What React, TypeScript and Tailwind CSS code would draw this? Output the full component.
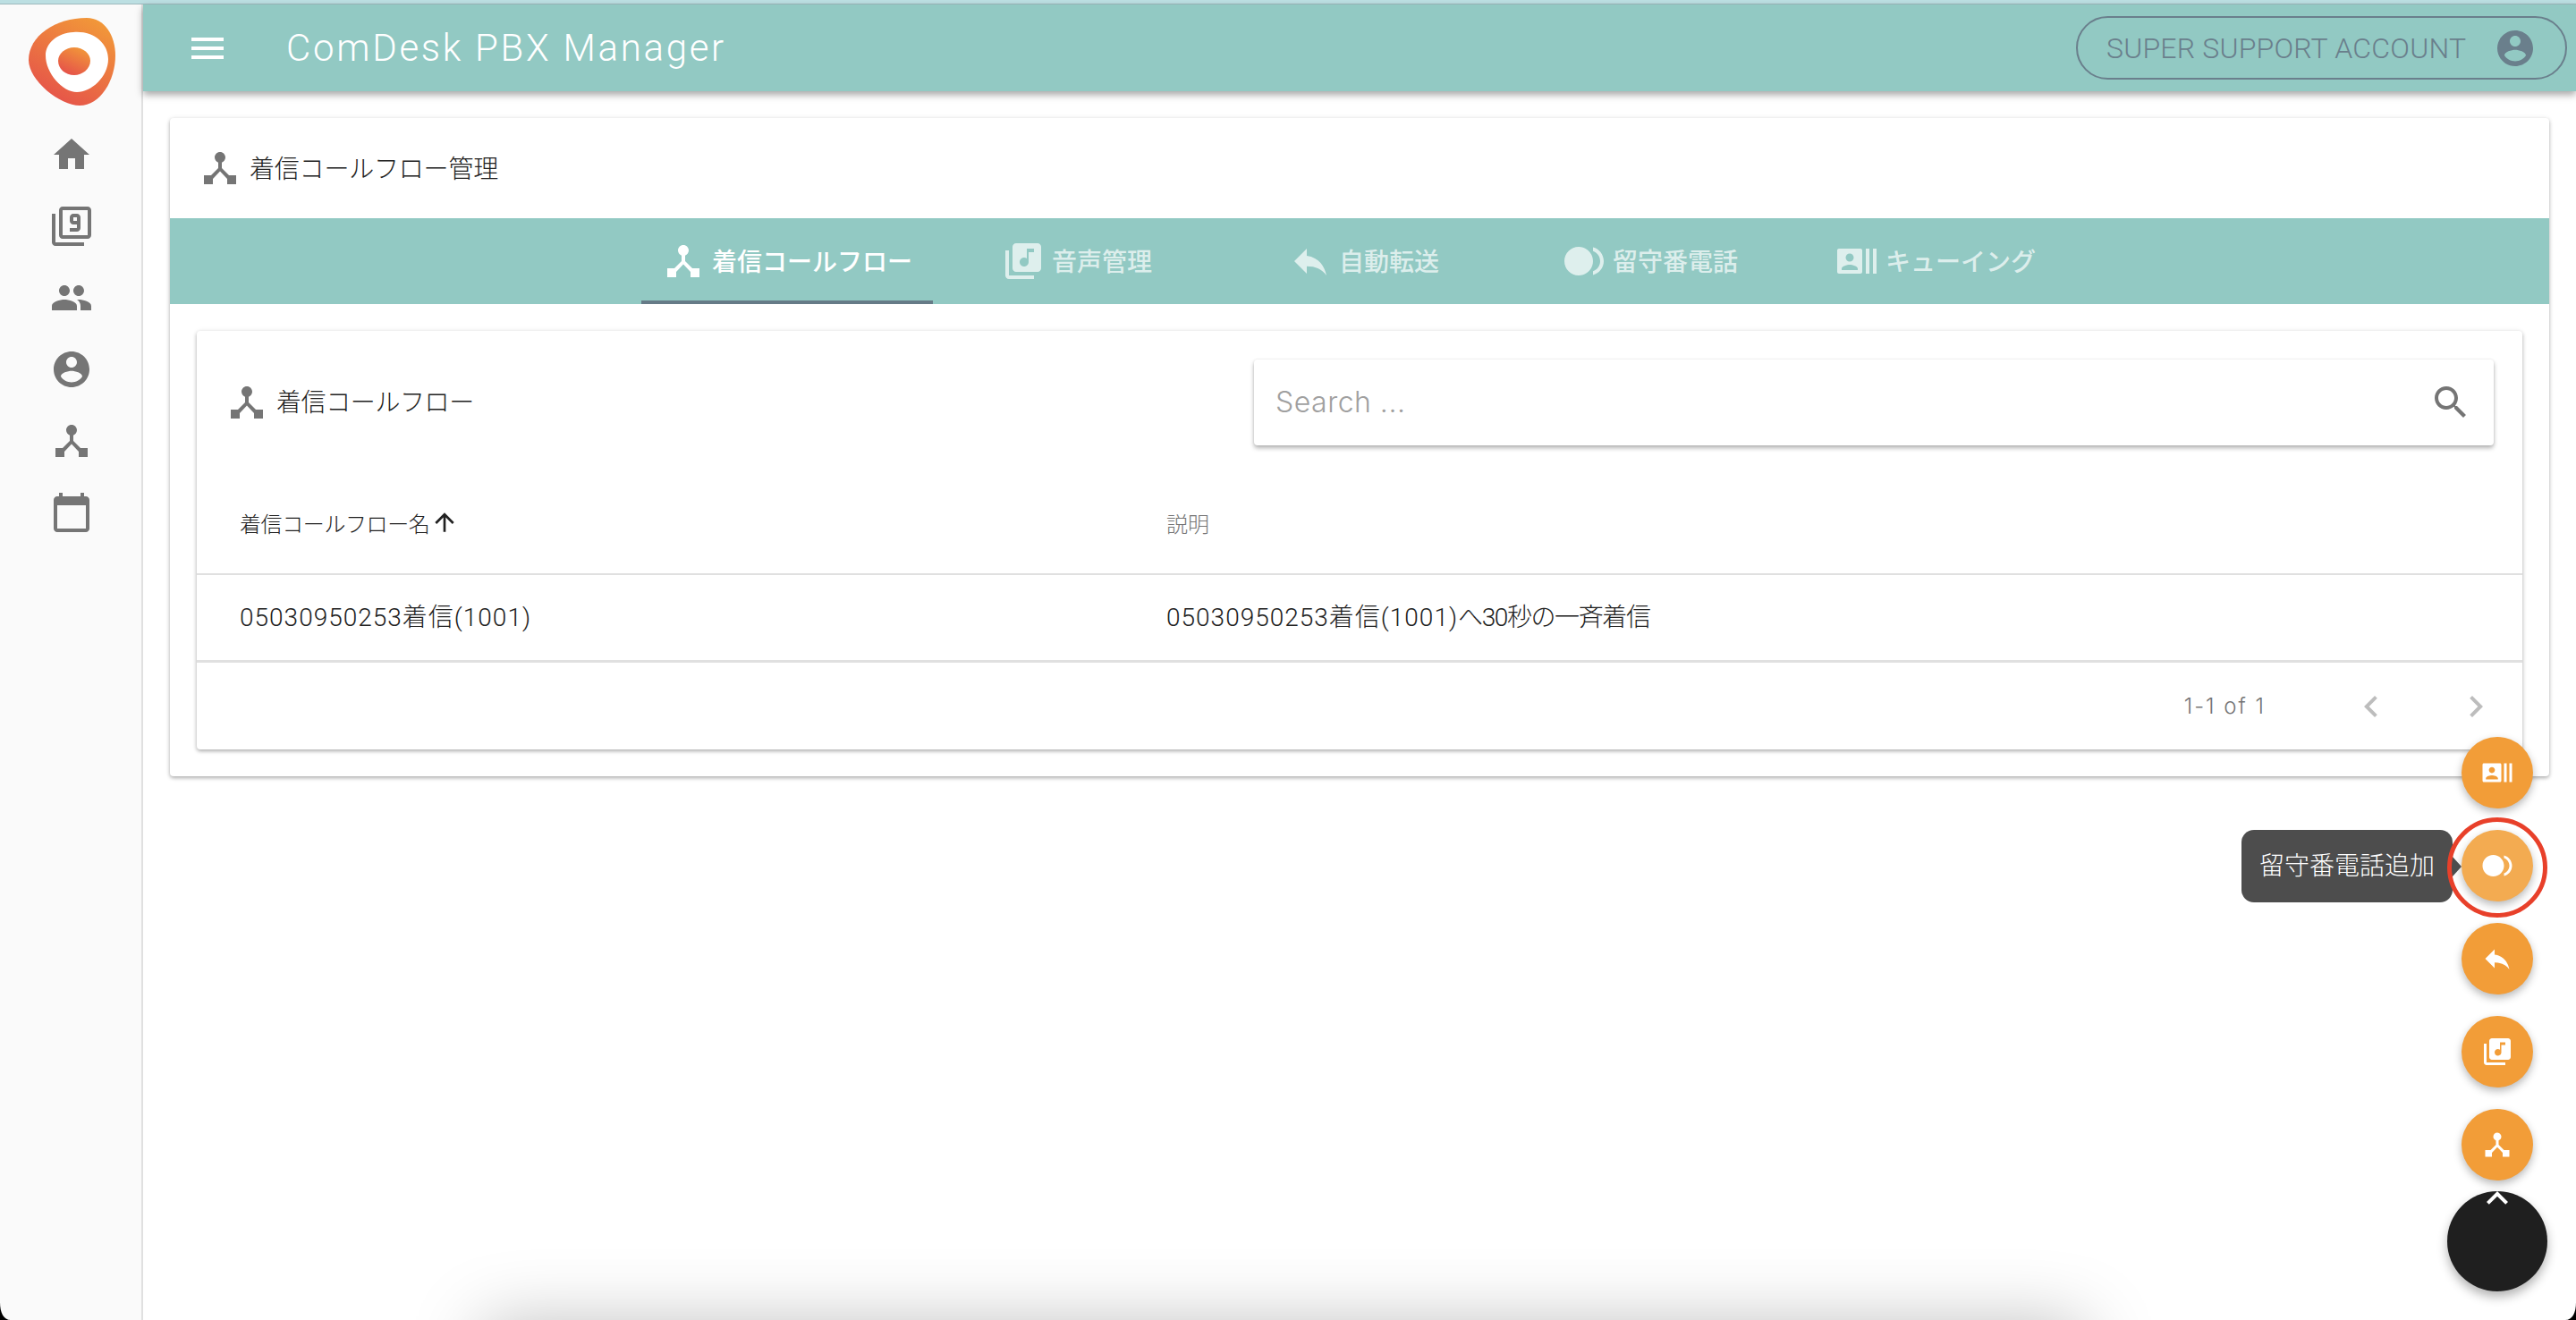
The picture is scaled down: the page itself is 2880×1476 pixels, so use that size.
import React from 'react';

const P = {
  home: 'M10 20v-6h4v6h5v-8h3L12 3 2 12h3v8z',
  filter9: 'M3 5H1v16c0 1.1.9 2 2 2h16v-2H3V5zm18-4H7c-1.1 0-2 .9-2 2v14c0 1.1.9 2 2 2h14c1.1 0 2-.9 2-2V3c0-1.1-.9-2-2-2zm0 16H7V3h14v14zM15 5h-2c-1.1 0-2 .89-2 2v2c0 1.11.9 2 2 2h2v2h-4v2h4c1.1 0 2-.89 2-2V7c0-1.11-.9-2-2-2zm0 4h-2V7h2v2z',
  people: 'M16 11c1.66 0 2.99-1.34 2.99-3S17.66 5 16 5c-1.66 0-3 1.34-3 3s1.34 3 3 3zm-8 0c1.66 0 2.99-1.34 2.99-3S9.66 5 8 5C6.34 5 5 6.34 5 8s1.34 3 3 3zm0 2c-2.33 0-7 1.17-7 3.5V19h14v-2.5c0-2.33-4.67-3.5-7-3.5zm8 0c-.29 0-.62.02-.97.05 1.16.84 1.97 1.97 1.97 3.45V19h6v-2.5c0-2.33-4.67-3.5-7-3.5z',
  account: 'M12 2C6.48 2 2 6.48 2 12s4.48 10 10 10 10-4.48 10-10S17.52 2 12 2zm0 3c1.66 0 3 1.34 3 3s-1.34 3-3 3-3-1.34-3-3 1.34-3 3-3zm0 14.2c-2.5 0-4.71-1.28-6-3.22.03-1.99 4-3.08 6-3.08 1.99 0 5.97 1.09 6 3.08-1.29 1.94-3.5 3.22-6 3.22z',
  hub: 'M17 16l-4-4V8.82C14.16 8.4 15 7.3 15 6c0-1.66-1.34-3-3-3S9 4.34 9 6c0 1.3.84 2.4 2 2.82V12l-4 4H3v5h5v-3.05l4-4.2 4 4.2V21h5v-5h-4z',
  calendar: 'M20 3h-1V1h-2v2H7V1H5v2H4c-1.1 0-2 .9-2 2v16c0 1.1.9 2 2 2h16c1.1 0 2-.9 2-2V5c0-1.1-.9-2-2-2zm0 18H4V8h16v13z',
  music: 'M20 2H8c-1.1 0-2 .9-2 2v12c0 1.1.9 2 2 2h12c1.1 0 2-.9 2-2V4c0-1.1-.9-2-2-2zm-2 5h-3v5.5c0 1.38-1.12 2.5-2.5 2.5S10 13.88 10 12.5s1.12-2.5 2.5-2.5c.57 0 1.08.19 1.5.51V5h4v2zM4 6H2v14c0 1.1.9 2 2 2h14v-2H4V6z',
  reply: 'M10 9V5l-7 7 7 7v-4.1c5 0 8.5 1.6 11 5.1-1-5-4-10-11-11z',
  toll: 'M9 4c4.42 0 8 3.58 8 8s-3.58 8-8 8-8-3.58-8-8 3.58-8 8-8zM21 12c0-2.61-1.67-4.83-4-5.65V4.26c3.45.89 6 4.01 6 7.74s-2.55 6.85-6 7.74v-2.09c2.33-.82 4-3.04 4-5.65z',
  actors: 'M21 5v14h2V5h-2zm-4 14h2V5h-2v14zM14 5H2c-.55 0-1 .45-1 1v12c0 .55.45 1 1 1h12c.55 0 1-.45 1-1V6c0-.55-.45-1-1-1zM8 7.75c1.24 0 2.25 1.01 2.25 2.25S9.24 12.25 8 12.25 5.75 11.24 5.75 10 6.76 7.75 8 7.75zM12.5 17h-9v-.75c0-1.5 3-2.25 4.5-2.25s4.5.75 4.5 2.25V17z',
  search: 'M15.5 14h-.79l-.28-.27C15.41 12.59 16 11.11 16 9.5 16 5.91 13.09 3 9.5 3S3 5.91 3 9.5 5.91 16 9.5 16c1.61 0 3.09-.59 4.23-1.57l.27.28v.79l5 4.99L20.49 19l-4.99-5zm-6 0C7.01 14 5 11.99 5 9.5S7.01 5 9.5 5 14 7.01 14 9.5 11.99 14 9.5 14z',
  menu: 'M3 18h18v-2H3v2zm0-5h18v-2H3v2zm0-7v2h18V6H3z',
  left: 'M15.41 7.41L14 6l-6 6 6 6 1.41-1.41L10.83 12z',
  right: 'M10 6L8.59 7.41 13.17 12l-4.58 4.59L10 18l6-6z',
  up: 'M4 12l1.41 1.41L11 7.83V20h2V7.83l5.58 5.59L20 12l-8-8-8 8z',
  less: 'M12 8l-6 6 1.41 1.41L12 10.83l4.59 4.58L18 14z',
};

function Icon({ d, className }: { d: string; className?: string }) {
  return (
    <svg viewBox="0 0 24 24" className={className} fill="currentColor">
      <path d={d} />
    </svg>
  );
}

function Logo() {
  return (
    <svg viewBox="0 0 97 98" className="w-[97px] h-[98px]">
      <defs>
        <linearGradient id="logoGrad" x1="0.85" y1="0" x2="0.3" y2="1">
          <stop offset="0" stopColor="#f29b38" />
          <stop offset="1" stopColor="#e5514a" />
        </linearGradient>
      </defs>
      <path d="M65 0C85 0 97 20 97 42C97 70 80 98 57 98C35 98 0 70 0 47C0 20 30 0 65 0Z" fill="url(#logoGrad)" />
      <path d="M50 16C72 14 89 28 89 46C89 66 70 83 54 83C38 83 19 62 19 42C19 28 32 17 50 16Z" fill="#fff" />
      <path d="M51 33C61 33 69 40 69 48C69 57 60 64 51 64C41 64 33 57 33 48C33 40 41 33 51 33Z" fill="url(#logoGrad)" />
    </svg>
  );
}

const sideItems = [P.home, P.filter9, P.people, P.account, P.hub, P.calendar];

const tabs = [
  { label: '着信コールフロー', icon: P.hub, w: 'w-[326px]', active: true },
  { label: '音声管理', icon: P.music, w: 'w-[322px]', active: false },
  { label: '自動転送', icon: P.reply, w: 'w-[320px]', active: false },
  { label: '留守番電話', icon: P.toll, w: 'w-[320px]', active: false },
  { label: 'キューイング', icon: P.actors, w: 'w-[318px]', active: false },
];

const fabs = [
  { icon: P.actors, hover: false },
  { icon: P.toll, hover: true },
  { icon: P.reply, hover: false },
  { icon: P.music, hover: false },
  { icon: P.hub, hover: false },
];

export default function App() {
  return (
    <div className="relative w-[2880px] h-[1476px] overflow-hidden bg-white flex flex-col font-['Roboto','Noto_Sans_CJK_JP',sans-serif] font-light text-[#212121]">
      <div className="h-[5px] bg-[#bcdfe2] border-b border-[#9fb9bd] shrink-0" />

      <div className="flex flex-1 min-h-0">
        {/* sidebar */}
        <div className="w-[160px] shrink-0 bg-[#fafafa] border-r-2 border-[#e0e0e0] flex flex-col items-center pl-[2px] pt-[15px]">
          <Logo />
          <div className="mt-[31px] flex flex-col items-center gap-[32px]">
            {sideItems.map((d, i) => (
              <Icon key={i} d={d} className="w-[48px] h-[48px] text-[#757575]" />
            ))}
          </div>
        </div>

        <div className="flex-1 min-w-0 flex flex-col">
          {/* app bar */}
          <div className="relative h-[97px] shrink-0 bg-[#92c9c3] flex items-center pl-[48px] pr-[10px] shadow-[0_4px_8px_rgba(0,0,0,0.35)]">
            <Icon d={P.menu} className="w-[48px] h-[48px] text-white" />
            <div className="ml-[64px] text-[42px] text-white tracking-[2.7px]">ComDesk PBX Manager</div>
            <div className="ml-auto w-[549px] h-[71px] rounded-full border-2 border-[#6a7f8c] flex items-center pl-[32px] pr-[32px] text-[#6a7f8c] text-[32px]">
              <span className="tracking-[0.2px]">SUPER SUPPORT ACCOUNT</span>
              <Icon d={P.account} className="ml-auto w-[48px] h-[48px]" />
            </div>
          </div>

          {/* page */}
          <div className="px-[30px] pt-[30px]">
            <div className="rounded-[4px] bg-white shadow-[0_2px_4px_rgba(0,0,0,0.3),0_0_6px_rgba(0,0,0,0.06)]">
              <div className="h-[112px] flex items-center pl-[32px] text-[28px]">
                <Icon d={P.hub} className="w-[48px] h-[48px] text-[#757575]" />
                <span className="ml-[9px] pt-[3px] tracking-[-0.2px]">着信コールフロー管理</span>
              </div>

              <div className="h-[96px] bg-[#92c9c3] flex justify-center">
                {tabs.map((t) => (
                  <div
                    key={t.label}
                    className={`${t.w} relative flex items-center justify-center gap-[8px] text-[28px] font-medium ${t.active ? 'text-white' : 'text-white/70'}`}
                  >
                    <Icon d={t.icon} className="w-[48px] h-[48px]" />
                    <span className="pt-[4px]">{t.label}</span>
                    {t.active && <div className="absolute left-0 right-0 bottom-0 h-[4px] bg-[#667b87]" />}
                  </div>
                ))}
              </div>

              <div className="p-[30px]">
                <div className="rounded-[4px] bg-white shadow-[0_2px_4px_rgba(0,0,0,0.3),0_0_6px_rgba(0,0,0,0.06)]">
                  <div className="h-[160px] flex items-center pl-[32px] pr-[32px] text-[28px]">
                    <Icon d={P.hub} className="w-[48px] h-[48px] text-[#757575]" />
                    <span className="ml-[9px] pt-[2px] tracking-[-0.4px]">着信コールフロー</span>
                    <div className="ml-auto w-[1386px] h-[96px] rounded-[4px] bg-white shadow-[0_3px_5px_rgba(0,0,0,0.3),0_0_3px_rgba(0,0,0,0.08)] flex items-center pl-[24px] pr-[24px]">
                      <span className="font-['Inter',sans-serif] text-[32px] tracking-[0.5px] text-[#a0a0a0]">Search ...</span>
                      <Icon d={P.search} className="ml-auto w-[48px] h-[48px] text-[#757575]" />
                    </div>
                  </div>

                  <div className="h-[113px] flex items-center border-b-2 border-[#e0e0e0] pl-[48px] text-[24px]">
                    <div className="w-[1036px] flex items-center">
                      <span className="pt-[2px] tracking-[-0.4px]">着信コールフロー名</span>
                      <Icon d={P.up} className="ml-[1px] -mt-[3px] w-[32px] h-[32px] text-[#212121]" />
                    </div>
                    <span className="pt-[2px] text-[#757575]">説明</span>
                  </div>

                  <div className="h-[98px] flex items-center border-b-[3px] border-[#e0e0e0] pl-[48px] text-[28px]">
                    <div className="w-[1036px] tracking-[1px]">05030950253着信(1001)</div>
                    <div>
                      <span className="tracking-[1px]">05030950253着信(1001)</span>
                      <span className="tracking-[-1.4px]">へ30秒の一斉着信</span>
                    </div>
                  </div>

                  <div className="h-[97px] flex items-center justify-end pr-[28px] text-[#757575]">
                    <span className="font-['Inter',sans-serif] text-[24px] tracking-[2px] mr-[94px]">1-1 of 1</span>
                    <Icon d={P.left} className="w-[48px] h-[48px] text-[#bdbdbd]" />
                    <Icon d={P.right} className="ml-[69px] w-[48px] h-[48px] text-[#bdbdbd]" />
                  </div>
                </div>
              </div>
            </div>
          </div>
        </div>
      </div>

      {/* speed dial */}
      <div className="absolute right-[48px] top-[824px] w-[80px] flex flex-col gap-[24px]">
        {fabs.map((f, i) => (
          <div
            key={i}
            className={`w-[80px] h-[80px] rounded-full flex items-center justify-center text-white shadow-[0_4px_10px_rgba(0,0,0,0.28)] ${f.hover ? 'bg-[#f3ab51]' : 'bg-[#f29d38]'}`}
          >
            <Icon d={f.icon} className="w-[36px] h-[36px]" />
          </div>
        ))}
      </div>

      <div className="absolute left-[2736px] top-[1332px] w-[112px] h-[112px] rounded-full bg-[#1f1f1f] shadow-[0_6px_12px_rgba(0,0,0,0.3)]" />
      <Icon d={P.less} className="absolute left-[2768px] top-[1316px] w-[48px] h-[48px] text-white" />

      {/* tooltip */}
      <div className="absolute left-[2506px] top-[928px] w-[236px] h-[81px] rounded-[14px] bg-[#4d4d4d] flex items-center justify-center text-[28px] text-white">
        留守番電話追加
      </div>
      <div className="absolute left-[2742px] top-[958px] w-0 h-0 border-y-[11px] border-y-transparent border-l-[10px] border-l-[#4d4d4d]" />

      {/* highlight ring */}
      <div className="absolute left-[2736px] top-[914px] w-[112px] h-[112px] rounded-full border-[5px] border-[#e8402a]" />

      {/* shadow of the dialog parked below the page */}
      <div className="absolute left-[540px] top-[1480px] w-[1790px] h-[200px] bg-white shadow-[0_0_80px_rgba(0,0,0,0.26)]" />

      {/* window corners */}
      <div className="absolute left-0 bottom-0 w-[12px] h-[20px] bg-black [clip-path:path('M0_0C0_12_4_20_12_20L0_20Z')]" />
      <div className="absolute right-0 bottom-0 w-[12px] h-[20px] bg-black [clip-path:path('M12_0C12_12_8_20_0_20L12_20Z')]" />
    </div>
  );
}
